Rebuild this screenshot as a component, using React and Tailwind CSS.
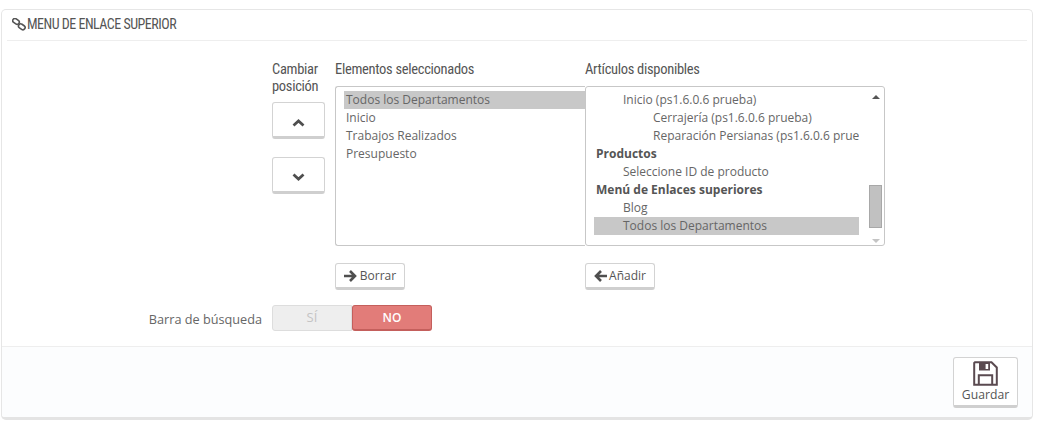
import React from "react";

const heading = "font-['Liberation_Sans_Narrow','Roboto_Condensed','Roboto',sans-serif]";
const colHead = `${heading} text-[14.5px] tracking-[-0.3px] leading-[17px] text-[#555]`;

function LinkIcon() {
  return (
    <svg width="14" height="13" viewBox="0 0 14 13" fill="none" stroke="#555" strokeWidth="1.6" className="shrink-0">
      <rect x="0.5" y="1.2" width="7" height="4.4" rx="2.2" transform="rotate(35 4 3.4)" />
      <rect x="6.3" y="6.6" width="7" height="4.4" rx="2.2" transform="rotate(35 9.8 8.8)" />
    </svg>
  );
}

function SaveIcon() {
  return (
    <svg width="25" height="25" viewBox="0 0 25 25" className="shrink-0">
      <path d="M2 1.2H18.5L23.8 6.5V23.8H1.2V2Z" fill="none" stroke="#5a4a50" strokeWidth="2" />
      <path d="M6 2H17V9.5H6Z" fill="#5a4a50" />
      <rect x="12.6" y="3" width="2.6" height="5" fill="#fff" />
      <path d="M5.8 23V14.2H19.2V23" fill="none" stroke="#5a4a50" strokeWidth="2" />
    </svg>
  );
}

function Chevron({ down, className = "" }) {
  return (
    <svg width="13" height="8" viewBox="0 0 13 8" fill="none" stroke="#4f4f4f" strokeWidth="2.8" className={className}>
      <path d={down ? "M1.5 1.5L6.5 6L11.5 1.5" : "M1.5 6.5L6.5 2L11.5 6.5"} />
    </svg>
  );
}

function Arrow({ left }) {
  return (
    <svg width="13" height="12" viewBox="0 0 13 12" fill="none" stroke="#4f4f4f" strokeWidth="2.6" className="shrink-0">
      {left ? <path d="M13 6H2.5M7 1L2 6L7 11" /> : <path d="M0 6H10.5M6 1L11 6L6 11" />}
    </svg>
  );
}

function Btn({ className = "", children }) {
  return (
    <div className={`flex items-center justify-center bg-white border border-[#d3d3d3] border-b-[3px] border-b-[#cfcfcf] rounded-[3px] text-[#555] ${className}`}>
      {children}
    </div>
  );
}

function Row({ indent = 0, bold, sel, children }) {
  return (
    <div
      className={`h-[18px] leading-[18px] whitespace-nowrap overflow-hidden ${sel ? "bg-[#c8c8c8]" : ""} ${bold ? "font-bold text-[#555]" : ""} ${indent === 0 ? "pl-[2px]" : indent === 1 ? "pl-[29px]" : "pl-[59px]"}`}
    >
      {children}
    </div>
  );
}

export default function App() {
  return (
    <div className="h-[436px] w-[1041px] bg-white pt-[9px] pl-[1px] pr-[8px] font-['Open_Sans',sans-serif] text-[12px] text-[#666]">
      <div className="h-[411px] flex flex-col border border-[#e6e6e6] border-b-[3px] border-b-[#e4e4e4] rounded-[5px] overflow-hidden">
        <div className="mx-[5px] h-[31px] shrink-0 border-b border-[#eeeeee] flex items-center gap-[1px] pl-[5px] pb-[1px]">
          <LinkIcon />
          <span className={`${heading} text-[14px] tracking-[-0.5px] text-[#555]`}>MENU DE ENLACE SUPERIOR</span>
        </div>

        <div className="flex-1 flex flex-col pl-[270px]">
          <div className="flex pt-[20px]">
            <div className="w-[53px] mr-[10px] flex flex-col">
              <div className={`${colHead} h-[41px]`}>Cambiar<br />posición</div>
              <Btn className="h-[37px] pt-[6px]"><Chevron /></Btn>
              <Btn className="h-[37px] mt-[18px] pt-[5px]"><Chevron down /></Btn>
            </div>
            <div className="flex flex-col">
              <div className="flex">
                <div className={`w-[250px] ${colHead} h-[25px]`}>Elementos seleccionados</div>
                <div className={`${colHead} h-[25px]`}>Artículos disponibles</div>
              </div>
              <div className="flex h-[160px]">
                <div className="w-[250px] border border-r-0 border-[#c7c7c7] rounded-l-[3px] pt-[4px] pl-[8px] overflow-hidden">
                  <Row sel>Todos los Departamentos</Row>
                  <Row>Inicio</Row>
                  <Row>Trabajos Realizados</Row>
                  <Row>Presupuesto</Row>
                </div>
                <div className="w-[300px] border border-[#c7c7c7] rounded-[3px] flex pt-[4px] pl-[8px]">
                  <div className="w-[265px] overflow-hidden">
                    <Row indent={1}>Inicio (ps1.6.0.6 prueba)</Row>
                    <Row indent={2}>Cerrajería (ps1.6.0.6 prueba)</Row>
                    <Row indent={2}>Reparación Persianas (ps1.6.0.6 prue</Row>
                    <Row bold>Productos</Row>
                    <Row indent={1}>Seleccione ID de producto</Row>
                    <Row bold>Menú de Enlaces superiores</Row>
                    <Row indent={1}>Blog</Row>
                    <Row indent={1} sel>Todos los Departamentos</Row>
                  </div>
                  <div className="ml-[10px] w-[13px] flex flex-col items-center -mt-[3px] pb-[1px]">
                    <div className="h-[17px] flex items-center justify-center">
                      <div className="w-0 h-0 border-x-[4px] border-x-transparent border-b-[4px] border-b-[#555]" />
                    </div>
                    <div className="flex-1 w-full flex flex-col justify-end">
                      <div className="h-[43px] w-full bg-[#c1c1c1] border border-[#a8a8a8] mb-[9px]" />
                    </div>
                    <div className="h-[7px] flex items-center justify-center">
                      <div className="w-0 h-0 border-x-[4px] border-x-transparent border-t-[4px] border-t-[#c4c4c4]" />
                    </div>
                  </div>
                </div>
              </div>
              <div className="flex pt-[17px]">
                <div className="w-[250px]">
                  <Btn className="w-[70px] h-[27px] gap-[3px]"><Arrow /><span>Borrar</span></Btn>
                </div>
                <Btn className="w-[70px] h-[27px] gap-[2px]"><Arrow left /><span>Añadir</span></Btn>
              </div>
            </div>
          </div>

          <div className="relative flex mt-[15px] h-[26px]">
            <div className="absolute right-full mr-[10px] top-0 h-[26px] leading-[28px] whitespace-nowrap text-[#666] text-[12.7px]">Barra de búsqueda</div>
            <div className="w-[80px] h-full flex items-center justify-center bg-[#eeeeee] border border-[#dddddd] rounded-l-[3px] text-[#c4c4c4] text-[13px]">SÍ</div>
            <div className="w-[80px] h-full flex items-center justify-center bg-[#e27c79] border border-[#c45f5c] border-b-2 rounded-[3px] text-white font-semibold">NO</div>
          </div>
        </div>

        <div className="h-[71px] shrink-0 bg-[#fcfdfe] border-t border-[#eeeeee] flex justify-end items-start pt-[10px] pr-[14px]">
          <Btn className="w-[65px] h-[51px] flex-col gap-[1px]">
            <SaveIcon />
            <span className="text-[#555] leading-[16px] text-[12.2px]">Guardar</span>
          </Btn>
        </div>
      </div>
    </div>
  );
}
